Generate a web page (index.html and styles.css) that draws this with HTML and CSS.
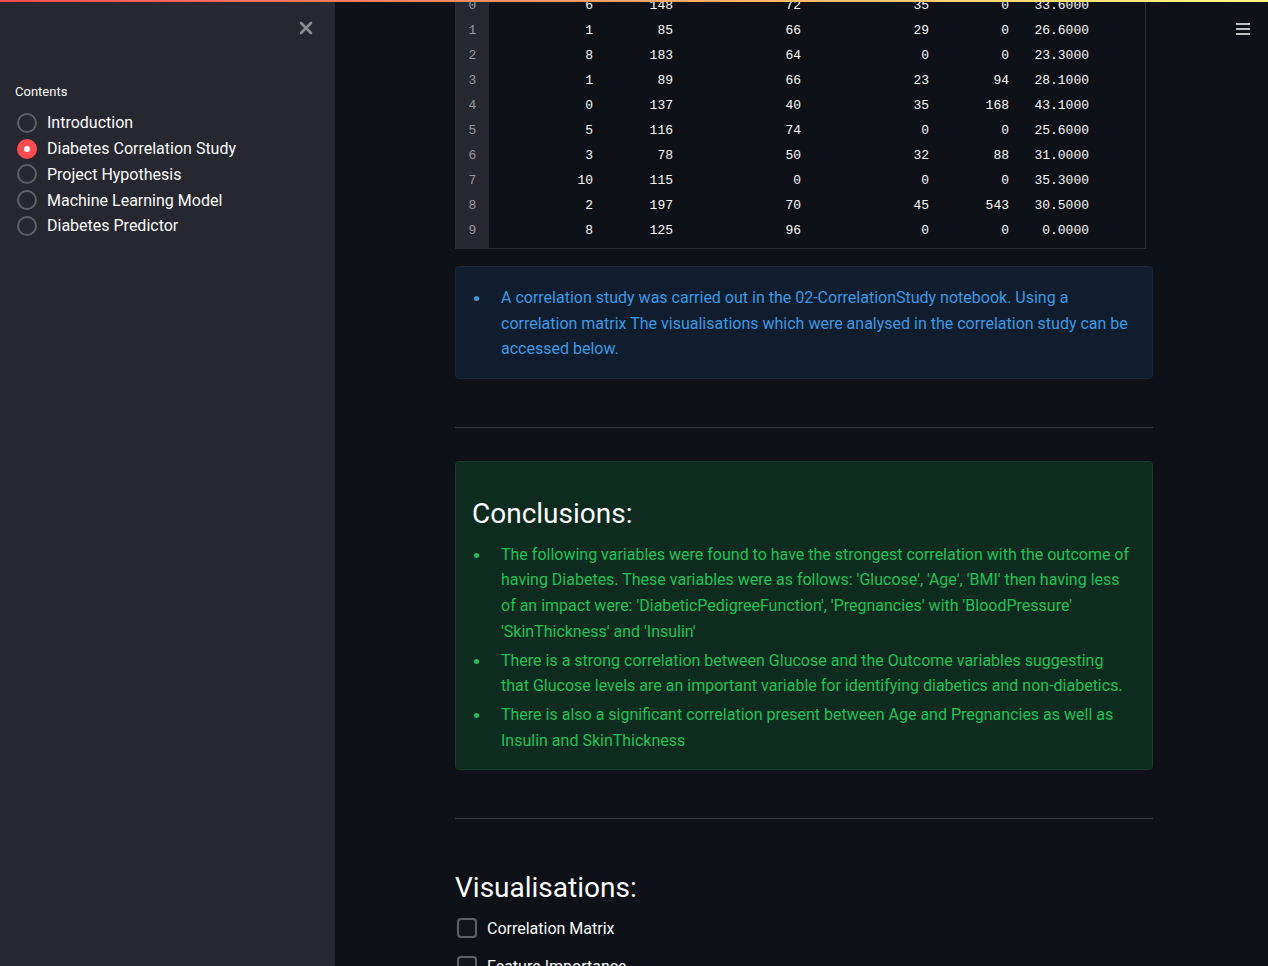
FILE: index.html
```html
<!DOCTYPE html>
<html lang="en">
<head>
<meta charset="utf-8">
<title>Diabetes Correlation Study</title>
<link rel="stylesheet" href="styles.css">
</head>
<body>
<div class="decoration"></div>
<div class="app">
  <aside class="sidebar">
    <div class="sidebar-top">
      <button class="close-btn" aria-label="Close sidebar">
        <svg width="14" height="14" viewBox="0 0 14 14"><path d="M2 2 L12 12 M12 2 L2 12" stroke="#8b8c92" stroke-width="2.6" stroke-linecap="round"/></svg>
      </button>
    </div>
    <div class="widget-label">Contents</div>
    <ul class="radio-group">
      <li class="radio"><span class="radio-dot"></span>Introduction</li>
      <li class="radio checked"><span class="radio-dot"></span>Diabetes Correlation Study</li>
      <li class="radio"><span class="radio-dot"></span>Project Hypothesis</li>
      <li class="radio"><span class="radio-dot"></span>Machine Learning Model</li>
      <li class="radio"><span class="radio-dot"></span>Diabetes Predictor</li>
    </ul>
  </aside>
  <main class="main">
    <button class="menu-btn" aria-label="Menu">
      <svg width="16" height="14" viewBox="0 0 16 14"><path d="M1 2 H15 M1 7 H15 M1 12 H15" stroke="#fafafa" stroke-width="1.6"/></svg>
    </button>
    <div class="block">
      <div class="dataframe">
        <table>
          <thead>
            <tr><th class="idx"></th><th class="c1">Pregnancies</th><th class="c2">Glucose</th><th class="c3">BloodPressure</th><th class="c4">SkinThickness</th><th class="c5">Insulin</th><th class="c6">BMI</th></tr>
          </thead>
          <tbody>
            <tr><td class="idx">0</td><td>6</td><td>148</td><td>72</td><td>35</td><td>0</td><td>33.6000</td></tr>
            <tr><td class="idx">1</td><td>1</td><td>85</td><td>66</td><td>29</td><td>0</td><td>26.6000</td></tr>
            <tr><td class="idx">2</td><td>8</td><td>183</td><td>64</td><td>0</td><td>0</td><td>23.3000</td></tr>
            <tr><td class="idx">3</td><td>1</td><td>89</td><td>66</td><td>23</td><td>94</td><td>28.1000</td></tr>
            <tr><td class="idx">4</td><td>0</td><td>137</td><td>40</td><td>35</td><td>168</td><td>43.1000</td></tr>
            <tr><td class="idx">5</td><td>5</td><td>116</td><td>74</td><td>0</td><td>0</td><td>25.6000</td></tr>
            <tr><td class="idx">6</td><td>3</td><td>78</td><td>50</td><td>32</td><td>88</td><td>31.0000</td></tr>
            <tr><td class="idx">7</td><td>10</td><td>115</td><td>0</td><td>0</td><td>0</td><td>35.3000</td></tr>
            <tr><td class="idx">8</td><td>2</td><td>197</td><td>70</td><td>45</td><td>543</td><td>30.5000</td></tr>
            <tr><td class="idx">9</td><td>8</td><td>125</td><td>96</td><td>0</td><td>0</td><td>0.0000</td></tr>
          </tbody>
        </table>
        <div class="df-fill"></div>
      </div>

      <div class="alert info">
        <ul>
          <li>A correlation study was carried out in the 02-CorrelationStudy notebook. Using a correlation matrix The visualisations which were analysed in the correlation study can be accessed below.</li>
        </ul>
      </div>

      <hr class="rule rule-a">

      <div class="alert success">
        <h2 class="alert-heading">Conclusions:</h2>
        <ul>
          <li>The following variables were found to have the strongest correlation with the outcome of having Diabetes. These variables were as follows: 'Glucose', 'Age', 'BMI' then having less of an impact were: 'DiabeticPedigreeFunction', 'Pregnancies' with 'BloodPressure' 'SkinThickness' and 'Insulin'</li>
          <li>There is a strong correlation between Glucose and the Outcome variables suggesting that Glucose levels are an important variable for identifying diabetics and non-diabetics.</li>
          <li>There is also a significant correlation present between Age and Pregnancies as well as Insulin and SkinThickness</li>
        </ul>
      </div>

      <hr class="rule rule-b">

      <h2 class="section-heading">Visualisations:</h2>
      <label class="checkbox"><span class="box"></span>Correlation Matrix</label>
      <label class="checkbox"><span class="box"></span>Feature Importance</label>
    </div>
  </main>
</div>
</body>
</html>
```

FILE: styles.css
```css
* { box-sizing: border-box; }

html, body {
  margin: 0;
  padding: 0;
  height: 100%;
  overflow: hidden;
  background: #0e1117;
  color: #fafafa;
  font-family: Roboto, "Noto Sans", sans-serif;
}

.decoration {
  position: fixed;
  top: 0;
  left: 0;
  right: 0;
  height: 2px;
  background: linear-gradient(90deg, #ff4b4b, #fffd80);
  z-index: 10;
}

.app {
  display: flex;
  height: 966px;
}

/* Sidebar */
.sidebar {
  width: 335px;
  flex: none;
  background: #262730;
  padding: 0 16px 0 15px;
}

.sidebar-top {
  display: flex;
  justify-content: flex-end;
  padding-top: 21px;
  height: 84px;
}

.close-btn {
  background: none;
  border: none;
  padding: 0;
  width: 14px;
  height: 14px;
  margin-right: 6px;
  display: flex;
}

.widget-label {
  font-size: 13px;
  line-height: 16px;
  color: #fafafa;
  margin-bottom: 10px;
}

.radio-group {
  list-style: none;
  margin: 0;
  padding: 0;
}

.radio {
  display: flex;
  align-items: center;
  height: 25.75px;
  font-size: 16px;
  color: #fafafa;
}

.radio-dot {
  width: 20px;
  height: 20px;
  border-radius: 50%;
  border: 2px solid #5f616a;
  margin: 0 10px 0 2px;
  flex: none;
  display: flex;
  align-items: center;
  justify-content: center;
}

.radio.checked .radio-dot {
  background: #ff4b4b;
  border-color: #ff4b4b;
}

.radio.checked .radio-dot::after {
  content: "";
  width: 6px;
  height: 6px;
  border-radius: 50%;
  background: #fff;
}

/* Main */
.main {
  flex: 1;
  position: relative;
  overflow: hidden;
}

.menu-btn {
  position: absolute;
  top: 22px;
  right: 17px;
  background: none;
  border: none;
  padding: 0;
  display: flex;
}

.block {
  width: 698px;
  margin-left: 120px;
  margin-top: -32px;
}

/* Dataframe */
.dataframe {
  width: 691px;
  border: 1px solid #2d2f37;
  border-top: none;
  display: flex;
  flex-direction: column;
  align-items: flex-start;
}

.dataframe table {
  border-collapse: collapse;
  table-layout: fixed;
  width: 641px;
  font-family: "Liberation Mono", "DejaVu Sans Mono", monospace;
  font-size: 13px;
  color: #fafafa;
}

.dataframe th,
.dataframe td {
  height: 25px;
  padding: 0 8px 0 0;
  text-align: right;
  white-space: nowrap;
  overflow: hidden;
  font-weight: 400;
}

.dataframe th { color: #a3a8b4; }

.dataframe .idx {
  width: 33px;
  padding: 0;
  text-align: center;
  background: #262730;
  color: #9a9ca4;
}

.c1 { width: 112px; }
.c2 { width: 80px; }
.c3 { width: 128px; }
.c4 { width: 128px; }
.c5 { width: 80px; }
.c6 { width: 80px; }

.df-fill {
  height: 5px;
  width: 33px;
  background: #262730;
}

/* Alerts */
.alert {
  border-radius: 4px;
  padding: 18px 20px 16px 16px;
  font-size: 16px;
  line-height: 25.6px;
}

.alert ul {
  list-style: none;
  margin: 0;
  padding: 0;
}

.alert li {
  position: relative;
  padding-left: 29px;
  margin-bottom: 3.4px;
}

.alert li:last-child { margin-bottom: 0; }

.alert li::before {
  content: "";
  position: absolute;
  left: 2px;
  top: 11px;
  width: 5px;
  height: 5px;
  border-radius: 50%;
  background: currentColor;
}

.info {
  margin-top: 17px;
  background: #0f1d2c;
  border: 1px solid #15283b;
  color: #3a9ae6;
}

.success {
  background: #0d2b1f;
  border: 1px solid #154028;
  color: #20c256;
  padding-top: 16px;
}

.alert-heading {
  margin: 0;
  padding: 18px 0 10px;
  font-size: 28px;
  line-height: 36px;
  font-weight: 400;
  color: #fafafa;
}

.rule {
  border: none;
  border-top: 1px solid #3b3d44;
  margin: 0;
}

.rule-a { margin-top: 48px; margin-bottom: 33px; }
.rule-b { margin-top: 48px; margin-bottom: 0; }

.section-heading {
  margin: 51px 0 10px;
  font-size: 28px;
  line-height: 36px;
  font-weight: 400;
  color: #fafafa;
}

.checkbox {
  display: flex;
  align-items: center;
  height: 24px;
  margin-bottom: 14px;
  font-size: 16px;
  color: #fafafa;
}

.box {
  width: 20px;
  height: 20px;
  border: 2px solid #5f616a;
  border-radius: 4px;
  background: #13161f;
  margin: 0 10px 0 2px;
  flex: none;
}
```
